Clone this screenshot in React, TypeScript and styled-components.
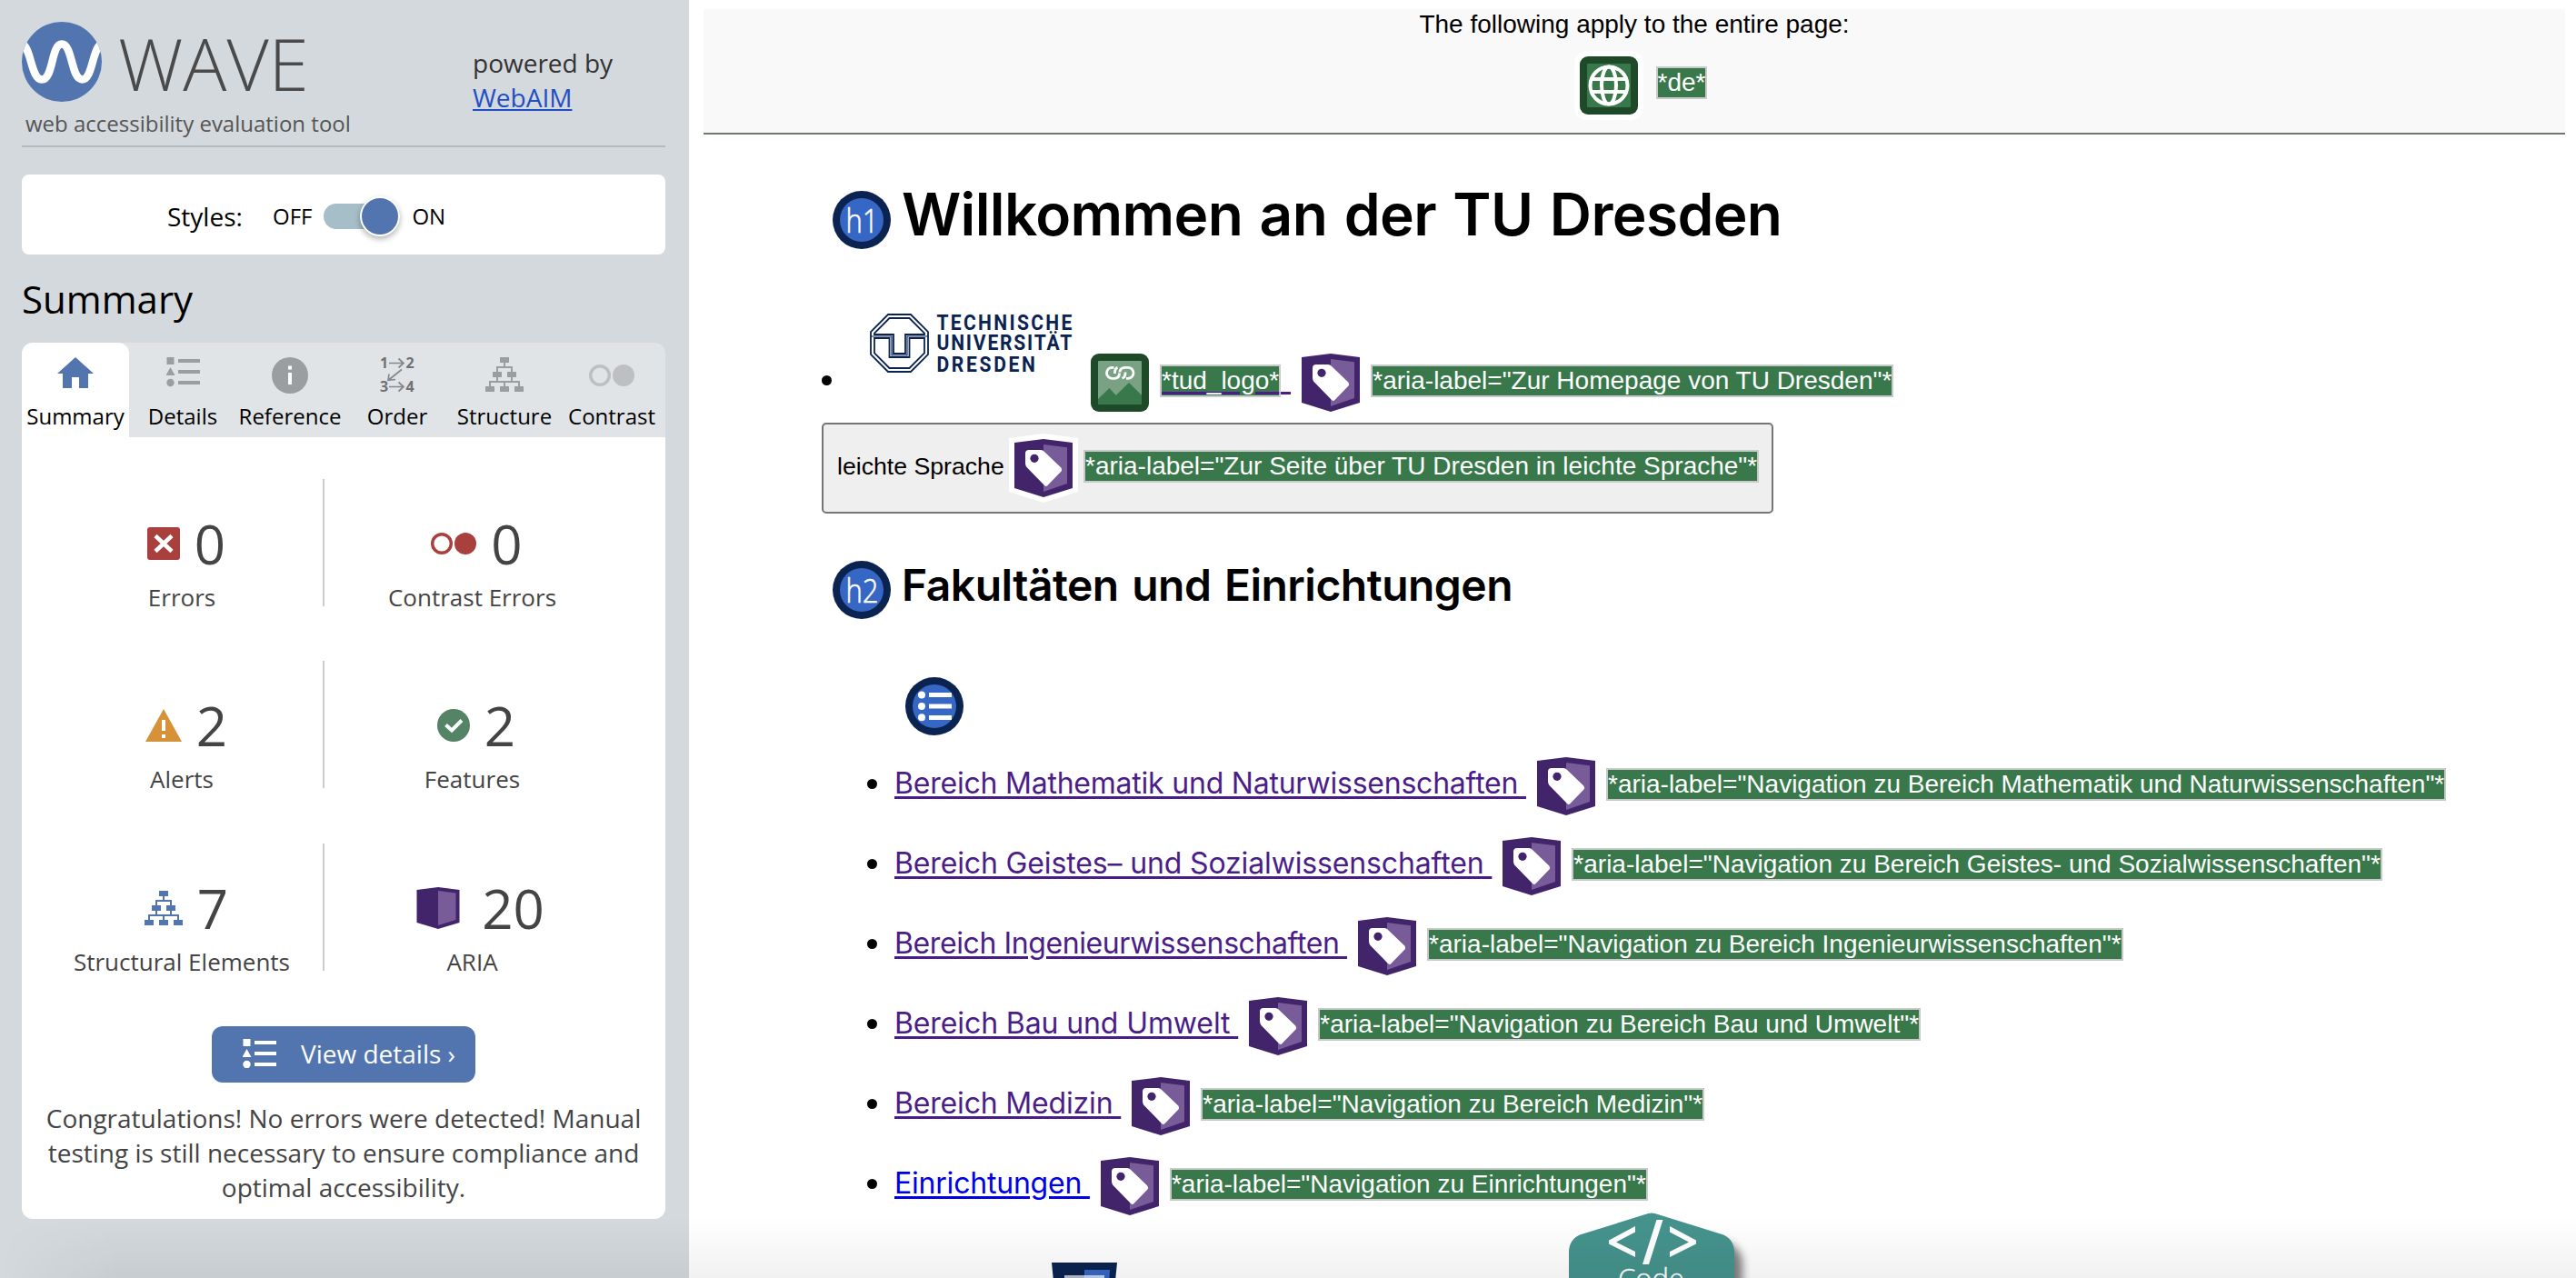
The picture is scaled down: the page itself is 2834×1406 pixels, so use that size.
import React from "react";
import styled, { createGlobalStyle } from "styled-components";

const Global = createGlobalStyle`
  body { margin: 0; background: #fff; overflow: hidden; }
  * { box-sizing: border-box; }
`;

const sans = `"Open Sans", sans-serif`;
const arial = `"Liberation Sans", Arial, sans-serif`;
const wide = `Inter, "Liberation Sans", sans-serif`;

const Page = styled.div`
  position: relative;
  display: flex;
  width: 2834px;
  height: 1406px;
  overflow: hidden;
  background: #fff;
`;

/* ---------- sidebar ---------- */
const Sidebar = styled.aside`
  width: 758px;
  flex: none;
  padding: 0 26px 0 24px;
  background: #d4d9dd;
  font-family: ${sans};
  color: #000;
`;
const Header = styled.header`
  display: flex;
  height: 162px;
  padding-top: 24px;
  border-bottom: 2px solid #b4b9bb;
  color: #444;
`;
const Brand = styled.div`
  width: 496px;
`;
const BrandRow = styled.div`
  display: flex;
  height: 88px;
  gap: 18px;
`;
const Wordmark = styled.div`
  font-size: 80px;
  font-weight: 300;
  line-height: 90px;
  color: #4a4a4a;
`;
const Tagline = styled.div`
  margin: 6px 0 0 4px;
  font-size: 24px;
  line-height: 36px;
  color: #555;
  white-space: nowrap;
`;
const Powered = styled.div`
  padding-top: 26px;
  font-size: 28px;
  line-height: 38px;
  color: #333;
`;
const PoweredLink = styled.a`
  display: block;
  color: #1f4fc4;
  text-decoration: underline;
`;
const StylesBox = styled.div`
  display: flex;
  align-items: center;
  height: 88px;
  margin-top: 30px;
  padding: 3px 0 0 160px;
  border-radius: 8px;
  background: #fff;
`;
const StylesLabel = styled.span`
  width: 116px;
  font-size: 28px;
`;
const SwitchWord = styled.span`
  font-size: 24px;
`;
const Track = styled.span`
  display: flex;
  align-items: center;
  justify-content: flex-end;
  width: 84px;
  height: 28px;
  margin: 0 13px 0 13px;
  border-radius: 14px;
  background: #a5bec8;
`;
const Knob = styled.span`
  flex: none;
  width: 44px;
  height: 44px;
  border: 2px solid #fff;
  border-radius: 50%;
  background: #5275b0;
  box-shadow: 0 3px 6px rgba(0, 0, 0, 0.3);
`;
const Heading = styled.h2`
  margin: 20px 0 0;
  height: 77px;
  font-size: 42px;
  font-weight: 400;
  line-height: 57px;
`;
const Tabs = styled.nav`
  display: flex;
  height: 104px;
  border-radius: 12px 12px 0 0;
  background: #e0e4e6;
`;
const Tab = styled.div<{ $active?: boolean }>`
  display: flex;
  flex-direction: column;
  align-items: center;
  width: 118px;
  padding-top: 16px;
  border-radius: 12px 12px 0 0;
  background: ${(p) => (p.$active ? "#fff" : "transparent")};
`;
const TabLabel = styled.span`
  margin-top: 8px;
  font-size: 24px;
  line-height: 33px;
  white-space: nowrap;
`;
const Panel = styled.section`
  height: 860px;
  padding-top: 46px;
  border-radius: 0 0 12px 12px;
  background: #fff;
  color: #444;
`;
const StatRow = styled.div<{ $height: number }>`
  display: flex;
  height: ${(p) => p.$height}px;
  padding-left: 21px;
`;
const Stat = styled.div<{ $divided?: boolean }>`
  display: flex;
  flex-direction: column;
  align-items: center;
  width: ${(p) => (p.$divided ? 312 : 325)}px;
  height: 140px;
  padding-top: 30px;
  border-right: ${(p) => (p.$divided ? "2px solid #ccc" : "0")};
`;
const StatTop = styled.div<{ $gap: number; $shift: number }>`
  display: flex;
  flex: none;
  align-items: center;
  gap: ${(p) => p.$gap}px;
  height: 82px;
  padding-left: ${(p) => p.$shift}px;
  font-size: 60px;
  line-height: 82px;
`;
const StatLabel = styled.div`
  margin-top: 4px;
  font-size: 26px;
  line-height: 28px;
  white-space: nowrap;
`;
const DetailsButton = styled.div`
  display: flex;
  align-items: center;
  width: 290px;
  height: 62px;
  margin: 1px 0 0 209px;
  padding: 0 0 2px 34px;
  gap: 27px;
  border-radius: 12px;
  background: #5275b0;
  color: #fff;
  font-size: 28px;
  white-space: nowrap;
`;
const Verdict = styled.p`
  margin: 20px 0 0;
  text-align: center;
  font-size: 28px;
  line-height: 38px;
`;

/* ---------- page ---------- */
const Main = styled.main`
  flex: 1;
  padding: 10px 12px 0 16px;
  font-family: ${arial};
  color: #000;
`;
const PageBar = styled.div`
  height: 138px;
  padding-top: 1px;
  border-bottom: 2px solid #6b7b6b;
  background: #f9f9f9;
  text-align: center;
  font-size: 28px;
  line-height: 32px;
`;
const PageBarIcons = styled.div`
  display: flex;
  align-items: center;
  justify-content: center;
  height: 76px;
  margin-top: 13px;
  padding-left: 14px;
  gap: 14px;
`;
const GlobeFrame = styled.span`
  display: flex;
  padding: 6px;
  border-radius: 14px;
  background: #fff;
`;
const Chip = styled.span<{ $underlined?: boolean }>`
  display: inline-block;
  height: 36px;
  border: 2px solid #c9c9c9;
  background: #38784a;
  color: #fff;
  font-size: 28px;
  line-height: 32px;
  white-space: pre;
  text-decoration: ${(p) => (p.$underlined ? "underline 3px #4b1d89" : "none")};
  text-underline-offset: 3px;
`;
const BarChip = styled(Chip)`
  margin-bottom: 6px;
`;
const Content = styled.div`
  padding-left: 130px;
`;
const TitleRow = styled.div<{ $top: number }>`
  display: flex;
  align-items: center;
  gap: 12px;
  height: 64px;
  margin-top: ${(p) => p.$top}px;
  padding-left: 12px;
`;
const Title = styled.h1<{ $size: number; $spacing: number; $lift: number }>`
  margin: 0 0 ${(p) => p.$lift}px;
  font-family: ${wide};
  font-size: ${(p) => p.$size}px;
  font-weight: 600;
  letter-spacing: ${(p) => p.$spacing}px;
  word-spacing: 3px;
  line-height: 64px;
  white-space: nowrap;
`;
const HomeRow = styled.div`
  display: flex;
  align-items: flex-end;
  height: 108px;
  margin-top: 71px;
`;
const Bullet = styled.span`
  flex: none;
  width: 11px;
  height: 11px;
  border-radius: 50%;
  background: #000;
`;
const HomeBullet = styled(Bullet)`
  margin-bottom: 29px;
`;
const Logo = styled.svg`
  align-self: flex-start;
  margin: 0 19px 0 42px;
`;
const HomeChips = styled.div`
  display: flex;
  align-items: center;
  height: 60px;
  margin-bottom: 4px;
`;
const HomeTrail = styled.span`
  width: 11px;
  height: 3px;
  margin: 26px 12px 0 0;
  background: #4b1d89;
`;
const Spaced = styled.span`
  display: flex;
  margin-left: 12px;
`;
const EasyButton = styled.div`
  display: flex;
  align-items: center;
  width: 1047px;
  height: 100px;
  margin-top: 12px;
  padding-left: 15px;
  border: 2px solid #757575;
  border-radius: 5px;
  background: #efefef;
  font-size: 26.67px;
  white-space: nowrap;
`;
const EasyText = styled.span`
  width: 195px;
  margin: 0 0 3px;
`;
const ListMark = styled.div`
  height: 64px;
  margin: 64px 0 0 92px;
`;
const List = styled.ul`
  margin: 24px 0 0;
  padding: 0 0 0 50px;
  list-style: none;
`;
const Item = styled.li`
  display: flex;
  align-items: center;
  height: 64px;
  margin-bottom: 24px;
`;
const ItemBullet = styled(Bullet)`
  margin: 0 19px 5px 0;
`;
const Link = styled.a<{ $color: string; $spacing: number }>`
  margin: 0 12px 7px 0;
  font-family: ${wide};
  font-size: 32px;
  line-height: 44px;
  letter-spacing: ${(p) => p.$spacing}px;
  white-space: pre;
  color: ${(p) => p.$color};
  text-decoration: underline 3px;
  text-underline-offset: 3px;
`;
const ItemChip = styled.span`
  display: flex;
  margin: 0 0 4px 12px;
`;
const NextShield = styled.svg`
  display: block;
  margin: 52px 0 0 253px;
`;
const CodeBadge = styled.svg`
  position: absolute;
  left: 1700px;
  top: 1320px;
`;
const BottomShade = styled.div`
  position: absolute;
  left: 0;
  right: 0;
  bottom: 0;
  height: 66px;
  background: linear-gradient(to bottom, rgba(0, 0, 0, 0), rgba(0, 0, 0, 0.055));
  mask-image: linear-gradient(to right, transparent, #000 130px);
`;

/* ---------- icons ---------- */
const WaveLogo = () => (
  <svg width="88" height="88" viewBox="0 0 88 88">
    <clipPath id="disc"><circle cx="44" cy="44" r="44" /></clipPath>
    <g clipPath="url(#disc)">
      <rect width="88" height="88" fill="#5275b0" />
      <path d="M-3 23C11 23 9 63.5 22 63.5S32 24.5 44 24.5S54 63.5 66.500 63.5S77 23 91 23" fill="none" stroke="#fff" strokeWidth="8.500" />
    </g>
  </svg>
);
const HomeIcon = () => (
  <svg width="40" height="40" viewBox="0 0 40 40">
    <path d="M20 0L40 18H34V34H24V22H16V34H6V18H0Z" fill="#5275b0" />
  </svg>
);
const ListIcon = ({ color, h = 40 }: { color: string; h?: number }) => (
  <svg width="37" height={h} viewBox={`0 0 37 ${h}`} fill={color}>
    <path d="M0.500 0h8v8h-8zM4.500 11L9.500 20H-.5zM13 2h24v4H13zM13 14h24v4H13zM13 26h24v4H13z" />
    <circle cx="4.500" cy="28" r="4.200" />
  </svg>
);
const InfoIcon = () => (
  <svg width="40" height="40" viewBox="0 0 40 40">
    <circle cx="20" cy="20" r="20" fill="#9b9ea0" />
    <path d="M18 9.500h4v4h-4zM18 17h4v13h-4z" fill="#fff" />
  </svg>
);
const OrderIcon = () => (
  <svg width="38" height="40" viewBox="0 0 38 40" overflow="visible">
    <g fontFamily="Open Sans" fontSize="16" fontWeight="700" fill="#6f7173">
      <text x="0" y="12">1</text>
      <text x="28.500" y="12">2</text>
      <text x="0" y="38">3</text>
      <text x="28.500" y="38">4</text>
    </g>
    <path d="M10 6.500H26M20.500 1.500L26 6.500L20.500 11.500M10 32.500H26M20.500 27.500L26 32.500L20.500 37.500M24 13.500L9.500 25M10 18.500L9 25.300L17 24.500" fill="none" stroke="#85888a" strokeWidth="1.700" />
  </svg>
);
const TreeIcon = ({ color, h = 40 }: { color: string; h?: number }) => (
  <svg width="42" height={h} viewBox={`0 0 42 ${h}`} fill={color}>
    <path d="M16 0h10v6H16zM8 16h10v6H8zM24 16h10v6H24zM0 32h10v6H0zM16 32h10v6H16zM32 32h10v6H32z" />
    <path d="M21 6V11M13 16V11H29V16M13 22V27M29 22V27M5 32V27H37V32M21 27V32" fill="none" stroke={color} strokeWidth="2" />
  </svg>
);
const ContrastIcon = ({ color, h = 24 }: { color: string; h?: number }) => (
  <svg width="50" height={h} viewBox={`0 ${(24 - h) / 2} 50 ${h}`}>
    <circle cx="12" cy="12" r="10.300" fill="none" stroke={color} strokeWidth="3.400" />
    <circle cx="38" cy="12" r="12" fill={color} />
  </svg>
);
const ErrorIcon = () => (
  <svg width="36" height="36" viewBox="0 0 36 36">
    <rect width="36" height="36" rx="3" fill="#aa403d" />
    <path d="M9 9.500L27 26.500M27 9.500L9 26.500" stroke="#fff" strokeWidth="4.500" />
  </svg>
);
const AlertIcon = () => (
  <svg width="40" height="36" viewBox="0 0 40 36">
    <path d="M20 0L40 36H0Z" fill="#d69239" />
    <path d="M18 12h4v12h-4zM18 28h4v4h-4z" fill="#fff" />
  </svg>
);
const CheckIcon = () => (
  <svg width="36" height="36" viewBox="0 0 36 36">
    <circle cx="18" cy="18" r="18" fill="#548366" />
    <path d="M9.500 17.500L16 23.500L27 12.500" fill="none" stroke="#fff" strokeWidth="4" />
  </svg>
);
const AriaIcon = () => (
  <svg width="48" height="48" viewBox="0 0 48 48">
    <path d="M24 1L47.500 4V40L24 47L0.500 40V4Z" fill="#42246a" />
    <path d="M24 5L43.500 7.500V37L24 43Z" fill="#775c99" />
  </svg>
);
const TagIcon = ({ halo }: { halo?: boolean }) => (
  <svg width="64" height="64" viewBox="0 0 64 64" overflow="visible">
    {halo && <path d="M32 -6L70 -1V58L32 70L-6 58V-1Z" fill="#fff" />}
    <path d="M32 0L64 4V54L32 64L0 54V4Z" fill="#42246a" />
    <path d="M32 6L58 9.300V49L32 58Z" fill="#775c99" />
    <path d="M16 12H29Q31.500 12 33 14L51.300 31.500Q52.700 33.500 51.500 35.500L36.500 51Q34.500 53 32.500 50.500L13.500 31Q12 29 12 26.500V16Q12 12 16 12Z" fill="#fff" />
    <circle cx="22" cy="21.300" r="4.600" fill="#42246a" />
  </svg>
);
const GlobeIcon = () => (
  <svg width="64" height="64" viewBox="0 0 64 64">
    <rect width="64" height="64" rx="9" fill="#1e4a2a" />
    <rect x="8" y="8" width="48" height="48" rx="1" fill="#38784a" />
    <g fill="none" stroke="#fff" strokeWidth="4">
      <circle cx="32" cy="32" r="20.500" />
      <ellipse cx="32" cy="32" rx="8" ry="20.500" />
      <path d="M13 25H51M13 39H51" />
    </g>
  </svg>
);
const LinkedImageIcon = () => (
  <svg width="64" height="64" viewBox="0 0 64 64">
    <rect width="64" height="64" rx="9" fill="#1e4a2a" />
    <rect x="8" y="8" width="48" height="48" rx="1" fill="#78a283" />
    <path d="M8 50L20.500 38L27.700 46L42 32L56 45.700V56H8Z" fill="#38784a" />
    <path d="M25.500 15.300H23.500A6 6 0 0 0 23.500 27.300H26Q31.500 27.300 31.500 21.500M39 27.300H41A6 6 0 0 0 41 15.300H38Q32 15.300 32 20.500M26.500 22V20.500Q26.500 16.500 29.500 15.300M38 20.500V22Q38 26 34.500 27.300" fill="none" stroke="#fff" strokeWidth="2.800" />
  </svg>
);
const RoundIcon = ({ children }: { children: React.ReactNode }) => (
  <svg width="64" height="64" viewBox="0 0 64 64">
    <circle cx="32" cy="32" r="32" fill="#0b2351" />
    <circle cx="32" cy="32" r="24" fill="#3767c4" />
    {children}
  </svg>
);
const LevelIcon = ({ level }: { level: string }) => (
  <RoundIcon>
    <text x="14.500" y="46" fontFamily="Open Sans" fontSize="36" fontWeight="300" fill="#fff" stroke="#fff" strokeWidth="0.600" textLength="36" lengthAdjust="spacingAndGlyphs">{level}</text>
  </RoundIcon>
);
const ListRoundIcon = () => (
  <RoundIcon>
    <g fill="#fff">
      <circle cx="18" cy="19.500" r="4" />
      <circle cx="18" cy="32" r="4" />
      <circle cx="18" cy="44.300" r="4" />
      <path d="M26 17h25v5H26zM26 29.500h25v5H26zM26 42h25v5H26z" />
    </g>
  </RoundIcon>
);
const TudLogo = () => (
  <Logo width="224" height="65" viewBox="0 0 224 65" overflow="visible">
    <g fill="none" stroke="#0b2351" strokeWidth="1.800">
      <path d="M20 1H45L64 20V45L45 64H20L1 45V20Z" />
      <path d="M21.500 5H43.500L60 21.500V23H39V44H26V23H5V21.500Z" />
      <path d="M5 27H21.500V48H43.500V27H60V43.500L43.500 60H21.500L5 43.500Z" />
      <path d="M1 25H24V46H41V25H64" strokeWidth="1.200" />
    </g>
    <g transform="translate(73.500 0) scale(0.860 1)" fontFamily="Roboto" fontSize="24.500" fontWeight="700" fill="#0b2351">
      <text x="0" y="17.500" textLength="173" lengthAdjust="spacing">TECHNISCHE</text>
      <text x="0" y="40.500" textLength="173" lengthAdjust="spacing">UNIVERSITÄT</text>
      <text x="0" y="64" textLength="126" lengthAdjust="spacing">DRESDEN</text>
    </g>
  </Logo>
);

/* ---------- data ---------- */
const stats = [
  [
    { icon: <ErrorIcon />, value: 0, label: "Errors", gap: 16, shift: 10 },
    { icon: <ContrastIcon color="#aa403d" />, value: 0, label: "Contrast Errors", gap: 16, shift: 10 },
  ],
  [
    { icon: <AlertIcon />, value: 2, label: "Alerts", gap: 16, shift: 10 },
    { icon: <CheckIcon />, value: 2, label: "Features", gap: 16, shift: 9 },
  ],
  [
    { icon: <TreeIcon color="#5275b0" h={38} />, value: 7, label: "Structural Elements", gap: 16, shift: 10 },
    { icon: <AriaIcon />, value: 20, label: "ARIA", gap: 24, shift: 18 },
  ],
];
const rowHeights = [200, 201, 200];
const visited = "#4b1d89";
const links = [
  { text: "Bereich Mathematik und Naturwissenschaften ", aria: "Navigation zu Bereich Mathematik und Naturwissenschaften", color: visited, spacing: -0.22 },
  { text: "Bereich Geistes– und Sozialwissenschaften ", aria: "Navigation zu Bereich Geistes- und Sozialwissenschaften", color: visited, spacing: -0.14 },
  { text: "Bereich Ingenieurwissenschaften ", aria: "Navigation zu Bereich Ingenieurwissenschaften", color: visited, spacing: -0.4 },
  { text: "Bereich Bau und Umwelt ", aria: "Navigation zu Bereich Bau und Umwelt", color: visited, spacing: -0.11 },
  { text: "Bereich Medizin ", aria: "Navigation zu Bereich Medizin", color: visited, spacing: -0.17 },
  { text: "Einrichtungen ", aria: "Navigation zu Einrichtungen", color: "#0000e8", spacing: -0.21 },
];
const tabs = [
  { label: "Summary", icon: <HomeIcon /> },
  { label: "Details", icon: <ListIcon color="#9b9ea0" /> },
  { label: "Reference", icon: <InfoIcon /> },
  { label: "Order", icon: <OrderIcon /> },
  { label: "Structure", icon: <TreeIcon color="#9b9ea0" /> },
  { label: "Contrast", icon: <ContrastIcon color="#bebfc3" h={40} /> },
];

export default function App() {
  return (
    <Page>
      <Global />
      <Sidebar>
        <Header>
          <Brand>
            <BrandRow>
              <WaveLogo />
              <Wordmark>WAVE</Wordmark>
            </BrandRow>
            <Tagline>web accessibility evaluation tool</Tagline>
          </Brand>
          <Powered>
            powered by
            <PoweredLink>WebAIM</PoweredLink>
          </Powered>
        </Header>
        <StylesBox>
          <StylesLabel>Styles:</StylesLabel>
          <SwitchWord>OFF</SwitchWord>
          <Track><Knob /></Track>
          <SwitchWord>ON</SwitchWord>
        </StylesBox>
        <Heading>Summary</Heading>
        <Tabs>
          {tabs.map((t, i) => (
            <Tab key={t.label} $active={i === 0}>
              {t.icon}
              <TabLabel>{t.label}</TabLabel>
            </Tab>
          ))}
        </Tabs>
        <Panel>
          {stats.map((row, r) => (
            <StatRow key={r} $height={rowHeights[r]}>
              {row.map((s, i) => (
                <Stat key={s.label} $divided={i === 0}>
                  <StatTop $gap={s.gap} $shift={s.shift}>
                    {s.icon}
                    <span>{s.value}</span>
                  </StatTop>
                  <StatLabel>{s.label}</StatLabel>
                </Stat>
              ))}
            </StatRow>
          ))}
          <DetailsButton>
            <ListIcon color="#fff" h={32} />
            <span>View details ›</span>
          </DetailsButton>
          <Verdict>
            Congratulations! No errors were detected! Manual
            <br />
            testing is still necessary to ensure compliance and
            <br />
            optimal accessibility.
          </Verdict>
        </Panel>
      </Sidebar>

      <Main>
        <PageBar>
          The following apply to the entire page:
          <PageBarIcons>
            <GlobeFrame><GlobeIcon /></GlobeFrame>
            <BarChip>*de*</BarChip>
          </PageBarIcons>
        </PageBar>
        <Content>
          <TitleRow $top={62}>
            <LevelIcon level="h1" />
            <Title $size={64} $spacing={-0.66} $lift={12}>Willkommen an der TU Dresden</Title>
          </TitleRow>
          <HomeRow>
            <HomeBullet />
            <TudLogo />
            <LinkedImageIcon />
            <HomeChips>
              <Spaced><Chip $underlined>*tud_logo*</Chip></Spaced>
              <HomeTrail />
            </HomeChips>
            <TagIcon />
            <HomeChips>
              <Spaced><Chip>*aria-label="Zur Homepage von TU Dresden"*</Chip></Spaced>
            </HomeChips>
          </HomeRow>
          <EasyButton>
            <EasyText>leichte Sprache</EasyText>
            <TagIcon halo />
            <ItemChip>
              <Chip>*aria-label="Zur Seite über TU Dresden in leichte Sprache"*</Chip>
            </ItemChip>
          </EasyButton>
          <TitleRow $top={52}>
            <LevelIcon level="h2" />
            <Title as="h2" $size={48} $spacing={-0.52} $lift={10}>Fakultäten und Einrichtungen</Title>
          </TitleRow>
          <ListMark><ListRoundIcon /></ListMark>
          <List>
            {links.map((l) => (
              <Item key={l.text}>
                <ItemBullet />
                <Link $color={l.color} $spacing={l.spacing}>{l.text}</Link>
                <TagIcon />
                <ItemChip>
                  <Chip>{`*aria-label="${l.aria}"*`}</Chip>
                </ItemChip>
              </Item>
            ))}
          </List>
          <NextShield width="72" height="80" viewBox="0 0 72 80">
            <path d="M0 0H72L64 80H8Z" fill="#0b2351" />
            <path d="M36 8H64L61 60H36Z" fill="#3767c4" />
            <path d="M14 14H58V60H14Z" fill="#fff" opacity="0.700" />
          </NextShield>
        </Content>
      </Main>

      <CodeBadge width="226" height="86" viewBox="0 0 226 86">
        <defs>
          <filter id="soft" x="-20%" y="-20%" width="150%" height="150%">
            <feGaussianBlur stdDeviation="5" />
          </filter>
        </defs>
        <path d="M50 48L114 28Q121 26 128 28L203 48Q217 56 217 70V140H40V66Z" fill="#000" opacity="0.500" filter="url(#soft)" />
        <path d="M38 38.500L110 16Q117 13 124 16L196 38.500Q208 44 208 58V140H26V58Q26 44 38 38.500Z" fill="#46938d" />
        <path d="M99 29V35.500L78 46.500L99 57V63L70 48.500V44.500ZM137 29V35.500L158 46.500L137 57V63L166 48.500V44.500ZM122.500 22H129.500L114 71H107Z" fill="#fff" />
        <text x="80" y="98" fontFamily="Open Sans" fontSize="31" fontWeight="300" fill="#fff" stroke="#fff" strokeWidth="0.400">Code</text>
      </CodeBadge>
      <BottomShade />
    </Page>
  );
}
